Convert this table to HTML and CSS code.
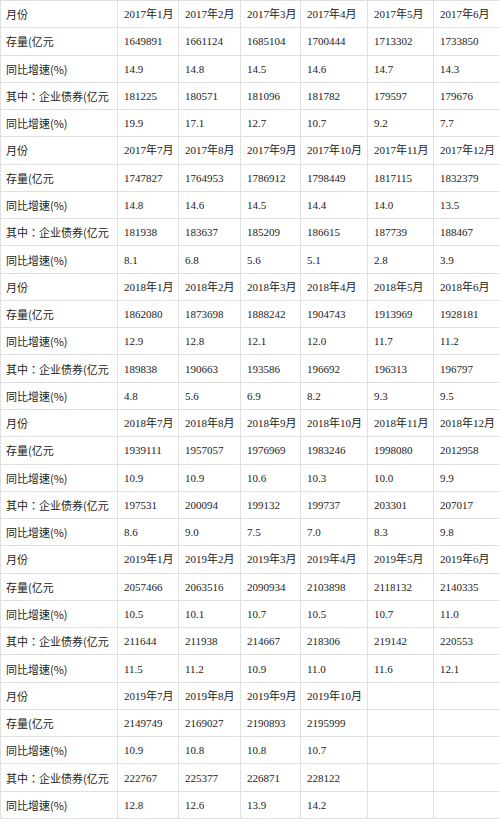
FILE: index.html
```html
<!DOCTYPE html>
<html>
<head>
<meta charset="utf-8">
<link rel="stylesheet" href="styles.css">
</head>
<body>
<table class="data">
<colgroup>
<col class="c0"><col class="c1"><col class="c2"><col class="c3"><col class="c4"><col class="c5"><col class="c6">
</colgroup>
<tbody>
<tr><td class="lbl">月份</td><td>2017年1月</td><td>2017年2月</td><td>2017年3月</td><td>2017年4月</td><td>2017年5月</td><td>2017年6月</td></tr>
<tr><td class="lbl">存量(亿元</td><td>1649891</td><td>1661124</td><td>1685104</td><td>1700444</td><td>1713302</td><td>1733850</td></tr>
<tr><td class="lbl">同比增速(%)</td><td>14.9</td><td>14.8</td><td>14.5</td><td>14.6</td><td>14.7</td><td>14.3</td></tr>
<tr><td class="lbl">其中：企业债券(亿元</td><td>181225</td><td>180571</td><td>181096</td><td>181782</td><td>179597</td><td>179676</td></tr>
<tr><td class="lbl">同比增速(%)</td><td>19.9</td><td>17.1</td><td>12.7</td><td>10.7</td><td>9.2</td><td>7.7</td></tr>

<tr><td class="lbl">月份</td><td>2017年7月</td><td>2017年8月</td><td>2017年9月</td><td>2017年10月</td><td>2017年11月</td><td>2017年12月</td></tr>
<tr><td class="lbl">存量(亿元</td><td>1747827</td><td>1764953</td><td>1786912</td><td>1798449</td><td>1817115</td><td>1832379</td></tr>
<tr><td class="lbl">同比增速(%)</td><td>14.8</td><td>14.6</td><td>14.5</td><td>14.4</td><td>14.0</td><td>13.5</td></tr>
<tr><td class="lbl">其中：企业债券(亿元</td><td>181938</td><td>183637</td><td>185209</td><td>186615</td><td>187739</td><td>188467</td></tr>
<tr><td class="lbl">同比增速(%)</td><td>8.1</td><td>6.8</td><td>5.6</td><td>5.1</td><td>2.8</td><td>3.9</td></tr>

<tr><td class="lbl">月份</td><td>2018年1月</td><td>2018年2月</td><td>2018年3月</td><td>2018年4月</td><td>2018年5月</td><td>2018年6月</td></tr>
<tr><td class="lbl">存量(亿元</td><td>1862080</td><td>1873698</td><td>1888242</td><td>1904743</td><td>1913969</td><td>1928181</td></tr>
<tr><td class="lbl">同比增速(%)</td><td>12.9</td><td>12.8</td><td>12.1</td><td>12.0</td><td>11.7</td><td>11.2</td></tr>
<tr><td class="lbl">其中：企业债券(亿元</td><td>189838</td><td>190663</td><td>193586</td><td>196692</td><td>196313</td><td>196797</td></tr>
<tr><td class="lbl">同比增速(%)</td><td>4.8</td><td>5.6</td><td>6.9</td><td>8.2</td><td>9.3</td><td>9.5</td></tr>

<tr><td class="lbl">月份</td><td>2018年7月</td><td>2018年8月</td><td>2018年9月</td><td>2018年10月</td><td>2018年11月</td><td>2018年12月</td></tr>
<tr><td class="lbl">存量(亿元</td><td>1939111</td><td>1957057</td><td>1976969</td><td>1983246</td><td>1998080</td><td>2012958</td></tr>
<tr><td class="lbl">同比增速(%)</td><td>10.9</td><td>10.9</td><td>10.6</td><td>10.3</td><td>10.0</td><td>9.9</td></tr>
<tr><td class="lbl">其中：企业债券(亿元</td><td>197531</td><td>200094</td><td>199132</td><td>199737</td><td>203301</td><td>207017</td></tr>
<tr><td class="lbl">同比增速(%)</td><td>8.6</td><td>9.0</td><td>7.5</td><td>7.0</td><td>8.3</td><td>9.8</td></tr>

<tr><td class="lbl">月份</td><td>2019年1月</td><td>2019年2月</td><td>2019年3月</td><td>2019年4月</td><td>2019年5月</td><td>2019年6月</td></tr>
<tr><td class="lbl">存量(亿元</td><td>2057466</td><td>2063516</td><td>2090934</td><td>2103898</td><td>2118132</td><td>2140335</td></tr>
<tr><td class="lbl">同比增速(%)</td><td>10.5</td><td>10.1</td><td>10.7</td><td>10.5</td><td>10.7</td><td>11.0</td></tr>
<tr><td class="lbl">其中：企业债券(亿元</td><td>211644</td><td>211938</td><td>214667</td><td>218306</td><td>219142</td><td>220553</td></tr>
<tr><td class="lbl">同比增速(%)</td><td>11.5</td><td>11.2</td><td>10.9</td><td>11.0</td><td>11.6</td><td>12.1</td></tr>

<tr><td class="lbl">月份</td><td>2019年7月</td><td>2019年8月</td><td>2019年9月</td><td>2019年10月</td><td></td><td></td></tr>
<tr><td class="lbl">存量(亿元</td><td>2149749</td><td>2169027</td><td>2190893</td><td>2195999</td><td></td><td></td></tr>
<tr><td class="lbl">同比增速(%)</td><td>10.9</td><td>10.8</td><td>10.8</td><td>10.7</td><td></td><td></td></tr>
<tr><td class="lbl">其中：企业债券(亿元</td><td>222767</td><td>225377</td><td>226871</td><td>228122</td><td></td><td></td></tr>
<tr><td class="lbl">同比增速(%)</td><td>12.8</td><td>12.6</td><td>13.9</td><td>14.2</td><td></td><td></td></tr>
</tbody>
</table>
</body>
</html>
```
FILE: styles.css
```css
html, body {
  margin: 0;
  padding: 0;
  background: #ffffff;
}
.data {
  border-collapse: collapse;
  table-layout: fixed;
  width: 500px;
  height: 819px;
  font-family: "Liberation Serif", "Noto Sans CJK SC", serif;
  font-size: 11px;
  color: #222222;
}
.c0 { width: 117px; }
.c1 { width: 61px; }
.c2 { width: 62px; }
.c3 { width: 60px; }
.c4 { width: 67px; }
.c5 { width: 66px; }
.c6 { width: 67px; }
.data td {
  border: 1px solid #e0e0e0;
  padding: 0 0 0 6px;
  height: 26px;
  vertical-align: middle;
  white-space: nowrap;
  overflow: hidden;
  line-height: 14px;
}
.data td.lbl {
  font-family: "Noto Sans CJK TC", "Noto Sans CJK SC", sans-serif;
  font-size: 11px;
  padding-left: 5px;
}
```
